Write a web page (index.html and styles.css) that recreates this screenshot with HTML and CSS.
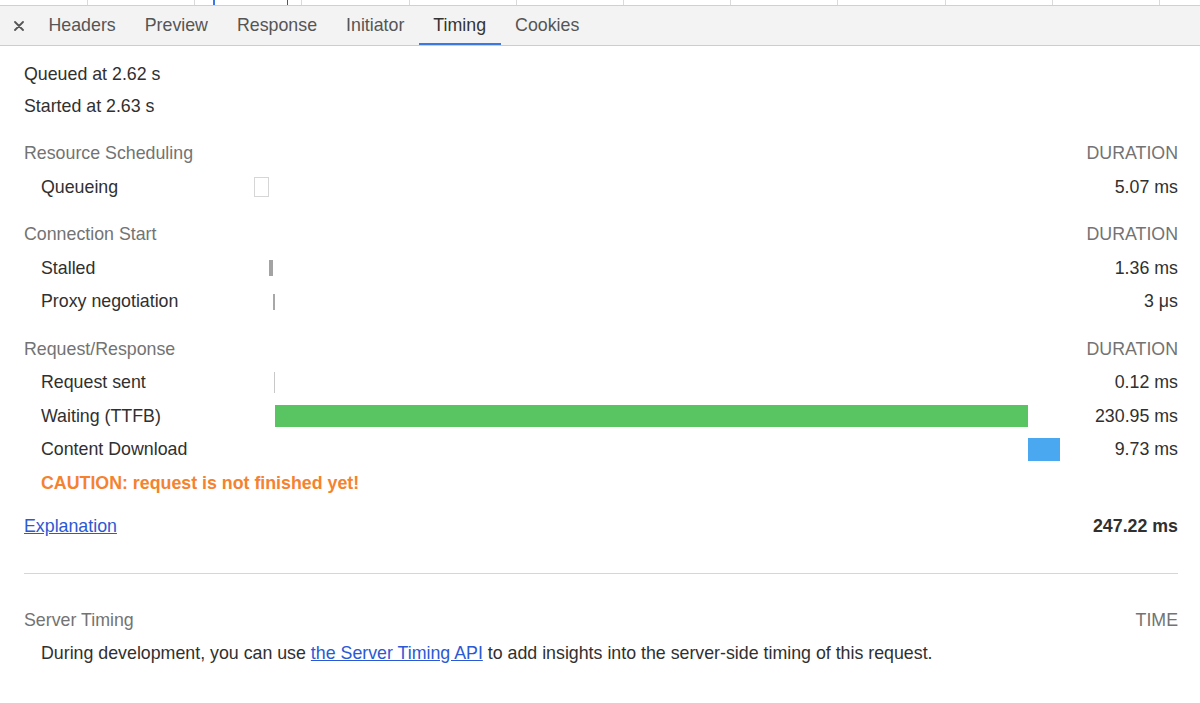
FILE: index.html
```html
<!DOCTYPE html>
<html lang="en">
<head>
<meta charset="utf-8">
<title>Timing</title>
<link rel="stylesheet" href="styles.css">
</head>
<body>
<div class="ruler">
  <div class="lead"></div>
  <div class="cell"></div><div class="cell"></div><div class="cell"></div><div class="cell"></div>
  <div class="cell"></div><div class="cell"></div><div class="cell"></div><div class="cell"></div>
  <div class="cell"></div><div class="cell"></div><div class="cell"></div>
  <span class="mark mark-blue"></span>
  <span class="mark mark-red"></span>
</div>
<div class="tabbar">
  <div class="close">
    <svg width="10" height="10" viewBox="0 0 10 10"><path d="M1 1 L9 9 M9 1 L1 9" stroke="#555" stroke-width="1.8" stroke-linecap="round" fill="none"/></svg>
  </div>
  <div class="tab">Headers</div>
  <div class="tab">Preview</div>
  <div class="tab">Response</div>
  <div class="tab">Initiator</div>
  <div class="tab active">Timing</div>
  <div class="tab">Cookies</div>
</div>

<div class="content">
  <div class="meta">Queued at 2.62 s</div>
  <div class="meta">Started at 2.63 s</div>

  <div class="group first">
    <div class="hdr">Resource Scheduling</div>
    <div class="hdr right">DURATION</div>
    <div class="name">Queueing</div>
    <div class="track"><span class="bar queue" style="margin-left:0;width:15px"></span></div>
    <div class="dur">5.07 ms</div>
  </div>

  <div class="group">
    <div class="hdr">Connection Start</div>
    <div class="hdr right">DURATION</div>
    <div class="name">Stalled</div>
    <div class="track"><span class="bar stalled" style="margin-left:15px;width:4px"></span></div>
    <div class="dur">1.36 ms</div>
    <div class="name">Proxy negotiation</div>
    <div class="track"><span class="bar proxy" style="margin-left:19px;width:1.5px"></span></div>
    <div class="dur">3 μs</div>
  </div>

  <div class="group">
    <div class="hdr">Request/Response</div>
    <div class="hdr right">DURATION</div>
    <div class="name">Request sent</div>
    <div class="track"><span class="bar sent" style="margin-left:19.5px;width:1.5px"></span></div>
    <div class="dur">0.12 ms</div>
    <div class="name">Waiting (TTFB)</div>
    <div class="track"><span class="bar waiting" style="margin-left:21px;width:753px"></span></div>
    <div class="dur">230.95 ms</div>
    <div class="name">Content Download</div>
    <div class="track"><span class="bar download" style="margin-left:774px;width:32px"></span></div>
    <div class="dur">9.73 ms</div>
    <div class="caution">CAUTION: request is not finished yet!</div>
  </div>

  <div class="group total">
    <div class="explain"><a href="#">Explanation</a></div>
    <div class="dur bold">247.22 ms</div>
  </div>

  <div class="separator"></div>

  <div class="group server">
    <div class="hdr">Server Timing</div>
    <div class="hdr right">TIME</div>
  </div>
  <div class="note">During development, you can use <a href="#">the Server Timing API</a> to add insights into the server-side timing of this request.</div>
</div>
</body>
</html>
```

FILE: styles.css
```css
html, body {
  margin: 0;
  padding: 0;
  background: #ffffff;
}

body {
  font-family: "Liberation Sans", Arial, Helvetica, sans-serif;
  font-size: 17.8px;
  color: #303030;
}

/* thin waterfall strip at the very top */
.ruler {
  position: relative;
  height: 5px;
  display: flex;
  overflow: hidden;
  background: #fff;
}
.ruler .lead {
  flex: 0 0 87px;
}
.ruler .cell {
  flex: 0 0 107.2px;
  box-sizing: border-box;
  border-left: 1px solid #dadada;
}
.ruler .mark {
  position: absolute;
  top: 0;
  height: 5px;
}
.mark-blue {
  left: 213px;
  width: 2px;
  background: #3b78e7;
}
.mark-red {
  left: 287px;
  width: 1px;
  background: #b03030;
}

/* tab bar */
.tabbar {
  display: flex;
  height: 41px;
  box-sizing: border-box;
  background: #f3f3f3;
  border-top: 1px solid #d0d0d0;
  border-bottom: 1px solid #cdcdcd;
}
.close {
  width: 34px;
  display: flex;
  align-items: center;
  justify-content: center;
  padding-left: 4px;
  box-sizing: border-box;
}
.close svg {
  display: block;
}
.tab {
  display: flex;
  align-items: center;
  padding: 0 14.5px;
  box-sizing: border-box;
  border-bottom: 2px solid transparent;
  border-top: 2px solid transparent;
  color: #555;
  white-space: nowrap;
}
.tab.active {
  color: #333;
  border-bottom-color: #3c78e0;
}

/* content */
.content {
  padding: 12px 22px 0 24px;
}
.meta {
  line-height: 32px;
  height: 32px;
}

.group {
  display: grid;
  grid-template-columns: 230px 806px 1fr;
  grid-auto-rows: 33.5px;
  align-items: center;
  margin-top: 14px;
}
.group.first {
  margin-top: 15px;
}
.hdr {
  grid-column: 1 / 3;
  color: #737373;
}
.hdr.right {
  grid-column: 3;
  text-align: right;
}
.name {
  padding-left: 17px;
  white-space: nowrap;
}
.track {
  display: flex;
  align-items: center;
  height: 100%;
}
.dur {
  text-align: right;
  white-space: nowrap;
}
.bold {
  font-weight: bold;
}

.bar {
  display: block;
  flex: 0 0 auto;
  box-sizing: border-box;
}
.bar.queue {
  height: 20px;
  background: #fff;
  border: 1px solid #d6d6d6;
}
.bar.stalled {
  height: 16px;
  background: #a3a3a3;
}
.bar.proxy {
  height: 16px;
  background: #a8a8a8;
}
.bar.sent {
  height: 21px;
  background: #c8c8c8;
}
.bar.waiting {
  height: 22px;
  background: #58c562;
}
.bar.download {
  height: 23px;
  background: #4aa8f0;
}

.caution {
  grid-column: 1 / 4;
  padding-left: 17px;
  color: #f5822f;
  font-weight: bold;
}

.group.total {
  margin-top: 10px;
}
.explain {
  grid-column: 1 / 3;
}
a {
  color: #2b59d3;
  text-decoration: underline;
}

.separator {
  margin-top: 29px;
  height: 1px;
  background: #d6d6d6;
}

.group.server {
  margin-top: 30px;
}
.note {
  padding-left: 17px;
  line-height: 32px;
  height: 32px;
  white-space: nowrap;
}
```
